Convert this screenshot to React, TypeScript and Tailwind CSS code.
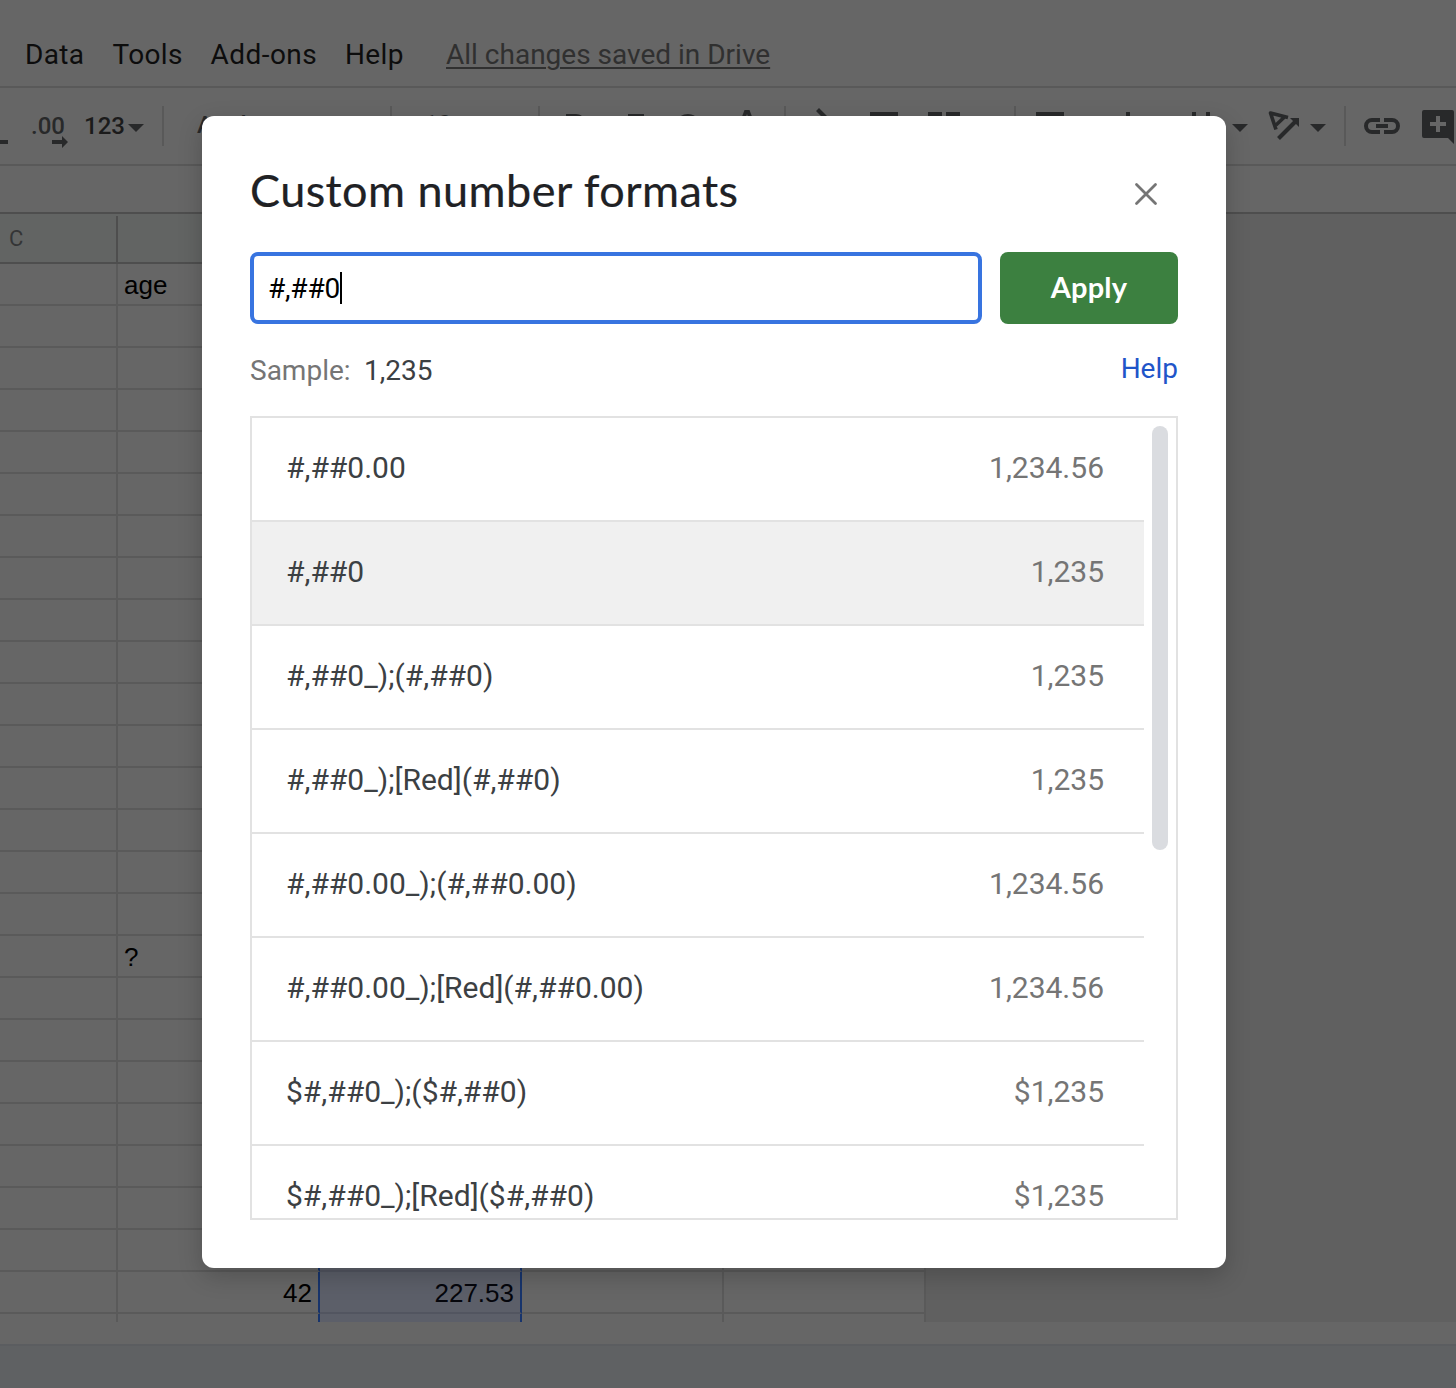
import React from "react";

const formats: [string, string][] = [
  ["#,##0.00", "1,234.56"],
  ["#,##0", "1,235"],
  ["#,##0_);(#,##0)", "1,235"],
  ["#,##0_);[Red](#,##0)", "1,235"],
  ["#,##0.00_);(#,##0.00)", "1,234.56"],
  ["#,##0.00_);[Red](#,##0.00)", "1,234.56"],
  ["$#,##0_);($#,##0)", "$1,235"],
  ["$#,##0_);[Red]($#,##0)", "$1,235"],
];

function Caret({ className = "" }: { className?: string }) {
  return (
    <svg className={`shrink-0 ${className}`} width="16" height="40" viewBox="0 0 16 40" fill="#28292a">
      <path d="M0 18h16l-8 8z" />
    </svg>
  );
}

function Divider({ className = "" }: { className?: string }) {
  return <div className={`h-10 w-0.5 shrink-0 bg-[#595959] ${className}`} />;
}

function MenuBar() {
  return (
    <div className="flex h-[88px] items-center border-b-2 border-[#595959] pt-6 pl-[25px] text-[28px] whitespace-nowrap text-[#0d0d0d]">
      <span className="w-[87.5px] tracking-[0.35px]">Data</span>
      <span className="w-[98px] tracking-[0.35px]">Tools</span>
      <span className="w-[134.5px] tracking-[0.45px]">Add-ons</span>
      <span className="w-[101px] tracking-[0.4px]">Help</span>
      <span className="text-[#303030] underline decoration-2 underline-offset-[3px]">All changes saved in Drive</span>
    </div>
  );
}

function Toolbar() {
  return (
    <div className="flex h-[78px] items-start overflow-hidden border-b-2 border-[#595959] pt-[18px] text-[24px] leading-10 whitespace-nowrap text-[#28292a]">
      <svg className="shrink-0" width="8" height="40" fill="#28292a">
        <path d="M0 34h8v4H0z" />
      </svg>
      <div className="relative ml-[23px] w-[38px] shrink-0 font-medium">
        .00
        <svg className="absolute top-[30px] left-[21px]" width="16" height="12" fill="#28292a">
          <path d="M0 4h10V0l6 6-6 6V8H0z" />
        </svg>
      </div>
      <span className="ml-[15px] w-11 shrink-0 font-medium text-[#1b1b1b]">123</span>
      <Caret />
      <Divider className="ml-[18px]" />
      <span className="-mt-px ml-[33px] w-[193px] shrink-0 font-medium">Arial</span>
      <Divider />
      <span className="-mt-0.5 ml-8 w-[114px] shrink-0 font-medium">10</span>
      <Divider />
      <svg className="ml-6 shrink-0" width="220" height="40" fill="none" stroke="#28292a" strokeWidth="4">
        <path d="M4 28V10h8q5 0 5 4t-5 5H4M12 19q7 0 7 5t-7 4H4" />
        <path d="M64 10h16M72 10l-4 18M60 28h14" />
        <path d="M132 15q-2-5-8-5-7 0-7 5 0 4 7 4" />
        <path d="M173 24l7.500-20h5l7.500 20h-4l-6-16-6 16z" fill="#28292a" stroke="none" />
      </svg>
      <Divider />
      <svg className="ml-6 shrink-0" width="204" height="40" fill="#28292a">
        <path d="m6 5 3-3 10 10-3 3zM4 12h12v12H4zM60 6h28v4H60zM118 6h14v6h-14zM136 6h14v6h-14z" />
      </svg>
      <Divider />
      <svg className="ml-5 shrink-0" width="180" height="40" fill="#28292a">
        <path d="M0 6h28v4H0zM90 6h4v14h-4zM156 6h4v14h-4zM170 6h4v14h-4z" />
      </svg>
      <Caret className="ml-4" />
      <svg className="ml-5 shrink-0" width="36" height="40" viewBox="0 0 36 40" fill="none" stroke="#28292a">
        <path d="M20 11.500 2.500 7 8 23.500M16.500 11 8 19" strokeWidth="3.600" strokeLinejoin="round" />
        <path d="m10.500 32.500 18-18" strokeWidth="4" />
        <path d="M22 12h9v9z" fill="#28292a" stroke="none" />
      </svg>
      <Caret className="ml-1.5" />
      <Divider className="ml-[18px]" />
      <svg className="ml-[18px] shrink-0" width="36" height="40" viewBox="0 0 36 40" fill="none" stroke="#28292a">
        <path d="M16 14H8a6 6 0 0 0 0 12h8M20 14h8a6 6 0 0 1 0 12h-8M12 20h12" strokeWidth="4" />
      </svg>
      <svg className="ml-[22px] shrink-0" width="32" height="40" viewBox="0 0 32 40">
        <path d="M2 4h28a2 2 0 0 1 2 2v32l-6-6H2a2 2 0 0 1-2-2V6a2 2 0 0 1 2-2z" fill="#28292a" />
        <path d="M8 18h16M16 10v16" stroke="#666" strokeWidth="4" />
      </svg>
    </div>
  );
}

function Cell({ text, selected }: { text?: string; selected?: boolean }) {
  return (
    <div
      className={`w-[202px] shrink-0 border-r-2 px-1.5 text-right ${
        selected ? "-mb-0.5 h-[42px] border-b-2 border-r-[#17346c] border-b-[#525560] bg-[#5c5f69] text-[#05060c]" : "h-full border-[#5a5a5a]"
      }`}
    >
      {text}
    </div>
  );
}

function Sheet() {
  const rows = Array.from({ length: 26 }, (_, i) => i);
  return (
    <div className="h-[1108px] overflow-hidden bg-[#606060]">
      <div className="flex h-[50px] w-[926px] border-b-2 border-[#4e4e4e] bg-[#626463] pt-0.5">
        <div className="w-[118px] border-r-2 border-[#4e4e4e] pl-[9px] text-[22px] leading-[46px] text-[#343536]">C</div>
        {[0, 1, 2, 3].map((i) => (
          <div key={i} className="w-[202px] border-r-2 border-[#4e4e4e]" />
        ))}
      </div>
      {rows.map((i) => {
        const selected = i >= 23;
        return (
          <div
            key={i}
            className="flex h-[42px] w-[926px] border-b-2 border-[#5a5a5a] bg-[#666] font-['Liberation_Sans',sans-serif] text-[26px] leading-[42px] text-black"
          >
            <div className="w-[118px] shrink-0 border-r-2 border-[#5a5a5a]" />
            <div
              className={`w-[202px] shrink-0 border-r-2 pr-1.5 pl-1.5 ${
                selected ? "-mb-0.5 h-[42px] border-b-2 border-r-[#17346c] border-b-[#5a5a5a] text-right" : "border-[#5a5a5a]"
              }`}
            >
              {i === 0 ? "age" : i === 16 ? "?" : i === 24 ? "42" : ""}
            </div>
            <Cell text={i === 24 ? "227.53" : ""} selected={selected} />
            <Cell />
            <Cell />
          </div>
        );
      })}
    </div>
  );
}

function Dialog() {
  return (
    <div className="absolute top-[116px] left-[202px] flex h-[1152px] w-[1024px] flex-col rounded-xl bg-white px-12 pt-12 shadow-[0_8px_24px_rgba(0,0,0,0.2)]">
      <div className="flex h-[88px] items-start justify-between pr-5">
        <h1 className="-mt-px font-['Lato',sans-serif] text-[45px] leading-[54px] tracking-[0.45px] whitespace-nowrap text-[#202124] [-webkit-text-stroke:0.2px_#202124]">
          Custom number formats
        </h1>
        <svg className="mt-[18px]" width="24" height="24" viewBox="0 0 24 24" stroke="#757575" strokeWidth="2.800" strokeLinecap="round">
          <path d="m2.500 2.500 19 19M21.500 2.500l-19 19" />
        </svg>
      </div>
      <div className="flex h-[72px] gap-[18px]">
        <div className="flex w-[732px] items-center rounded-lg border-4 border-[#3874e0] pl-3.5 text-[28px] text-black">
          <span className="mt-0.5 tracking-[-0.2px]">#,##0</span>
          <span className="h-8 w-0.5 bg-black" />
        </div>
        <button className="w-[178px] rounded-lg bg-[#3c8040] pb-0.5 font-['Lato',sans-serif] text-[29px] font-bold tracking-[0.2px] text-white">
          Apply
        </button>
      </div>
      <div className="flex h-[92px] items-start justify-between pt-[27px] text-[28px] leading-10 whitespace-nowrap">
        <div className="flex">
          <span className="w-[114px] text-[#757575]">Sample:</span>
          <span className="text-[#3c4043]">1,235</span>
        </div>
        <span className="-mt-0.5 text-[#1f55c9]">Help</span>
      </div>
      <div className="flex h-[804px] overflow-hidden border-2 border-[#e2e2e2]">
        <div className="w-[892px]">
          {formats.map(([format, sample], i) => (
            <div
              key={format}
              className={`flex h-[104px] items-center justify-between border-b-2 border-[#e2e2e2] pr-10 pb-1 pl-[34px] text-[30px] whitespace-nowrap ${
                i === 1 ? "bg-[#f0f0f0]" : ""
              }`}
            >
              <span className="text-[#3c4043]">{format}</span>
              <span className="text-[#757575]">{sample}</span>
            </div>
          ))}
        </div>
        <div className="mt-2 ml-2 h-[424px] w-4 rounded-full bg-[#dadce0]" />
      </div>
    </div>
  );
}

export default function App() {
  return (
    <div className="relative flex h-[1388px] w-[1456px] flex-col overflow-hidden bg-[#666] font-['Roboto',sans-serif]">
      <MenuBar />
      <Toolbar />
      <div className="h-12 border-b-2 border-[#4e4e4e]" />
      <Sheet />
      <div className="mt-[22px] flex-1 border-t-2 border-[#5b5d60] bg-[#5f6163]" />
      <Dialog />
    </div>
  );
}
